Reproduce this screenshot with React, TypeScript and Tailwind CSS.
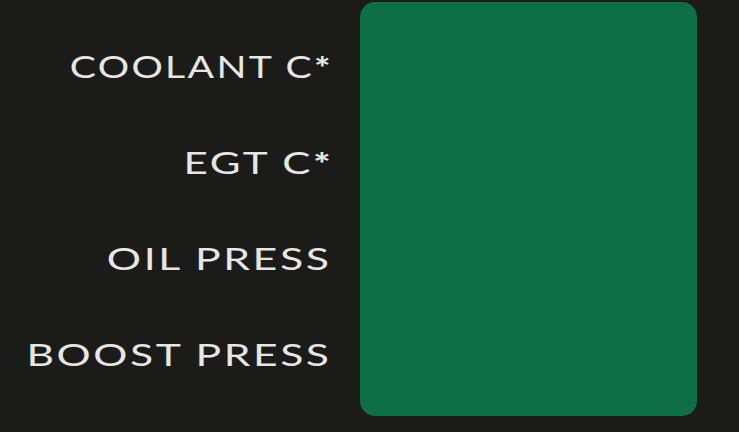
import React from "react";

const labels: { text: string; star: boolean; scale: string }[] = [
  { text: "COOLANT C", star: true, scale: "scale-x-[1.265]" },
  { text: "EGT C", star: true, scale: "scale-x-[1.36]" },
  { text: "OIL PRESS", star: false, scale: "scale-x-[1.38]" },
  { text: "BOOST PRESS", star: false, scale: "scale-x-[1.375]" },
];

export default function App() {
  return (
    <div
      className="w-[739px] h-[432px] bg-[#1b1c1a] flex overflow-hidden"
      style={{ fontFamily: "Lato, 'DejaVu Sans', sans-serif" }}
    >
      <div className="w-[329px] flex flex-col pt-[18px]">
        {labels.map((l) => (
          <div key={l.text} className="h-[96px] flex items-center justify-end">
            <span
              className={`inline-flex items-start origin-right ${l.scale} text-[31px] leading-none text-[#e6e6e2] font-normal whitespace-pre`}
            >
              <span className="tracking-[0.06em] -mr-[0.06em]">{l.text}</span>
              {l.star && (
                <span className="ml-[2px] mt-[1px] -mr-[1px] text-[30px] leading-none font-black">*</span>
              )}
            </span>
          </div>
        ))}
      </div>
      <div className="ml-[31px] mt-[2px] w-[337px] h-[414px] rounded-[15px] bg-[#0e6f47]" />
    </div>
  );
}
